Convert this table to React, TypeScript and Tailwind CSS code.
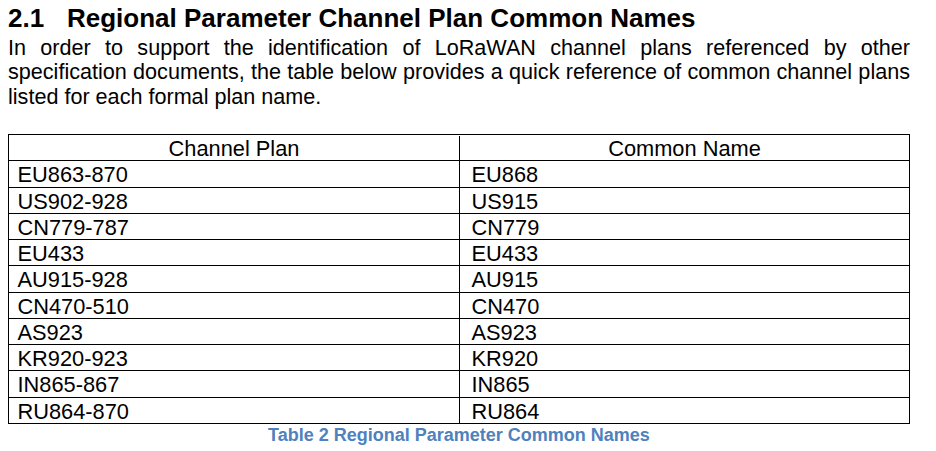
import React from 'react';

const rows: [string, string][] = [
  ['EU863-870', 'EU868'],
  ['US902-928', 'US915'],
  ['CN779-787', 'CN779'],
  ['EU433', 'EU433'],
  ['AU915-928', 'AU915'],
  ['CN470-510', 'CN470'],
  ['AS923', 'AS923'],
  ['KR920-923', 'KR920'],
  ['IN865-867', 'IN865'],
  ['RU864-870', 'RU864'],
];

export default function App() {
  return (
    <div className="min-h-[451px] w-[936px] bg-white text-black font-['Liberation_Sans',Arial,sans-serif]">
      <div className="ml-[8px] w-[902px] pt-[3px]">
        <h2 className="text-[26px] font-bold leading-[30px]">
          <span className="inline-block w-[59px]">2.1</span>Regional Parameter Channel Plan Common Names
        </h2>
        <p className="mt-[2.5px] text-[21.6px] leading-[24.5px] text-justify">
          In order to support the identification of LoRaWAN channel plans referenced by other
          specification documents, the table below provides a quick reference of common channel plans
          listed for each formal plan name.
        </p>

        <div className="mt-[25px] border border-black text-[21.8px] leading-[26px]">
          <div className="flex h-[26.27px] border-b border-black pt-[1px]">
            <div className="w-[451px] shrink-0 border-r border-black text-center">Channel Plan</div>
            <div className="flex-1 text-center">Common Name</div>
          </div>
          {rows.map(([plan, name], i) => (
            <div
              key={plan}
              className={
                i < rows.length - 1
                  ? 'flex h-[26.27px] border-b border-black'
                  : 'flex h-[25.27px]'
              }
            >
              <div className="w-[451px] shrink-0 border-r border-black pl-[8.5px] pt-[1px]">{plan}</div>
              <div className="flex-1 pl-[11.5px] pt-[1px]">{name}</div>
            </div>
          ))}
        </div>
        <div className="mt-[1.5px] text-center text-[18px] font-bold leading-[21px] text-[#4f81bd]">
          Table 2 Regional Parameter Common Names
        </div>
      </div>
    </div>
  );
}
